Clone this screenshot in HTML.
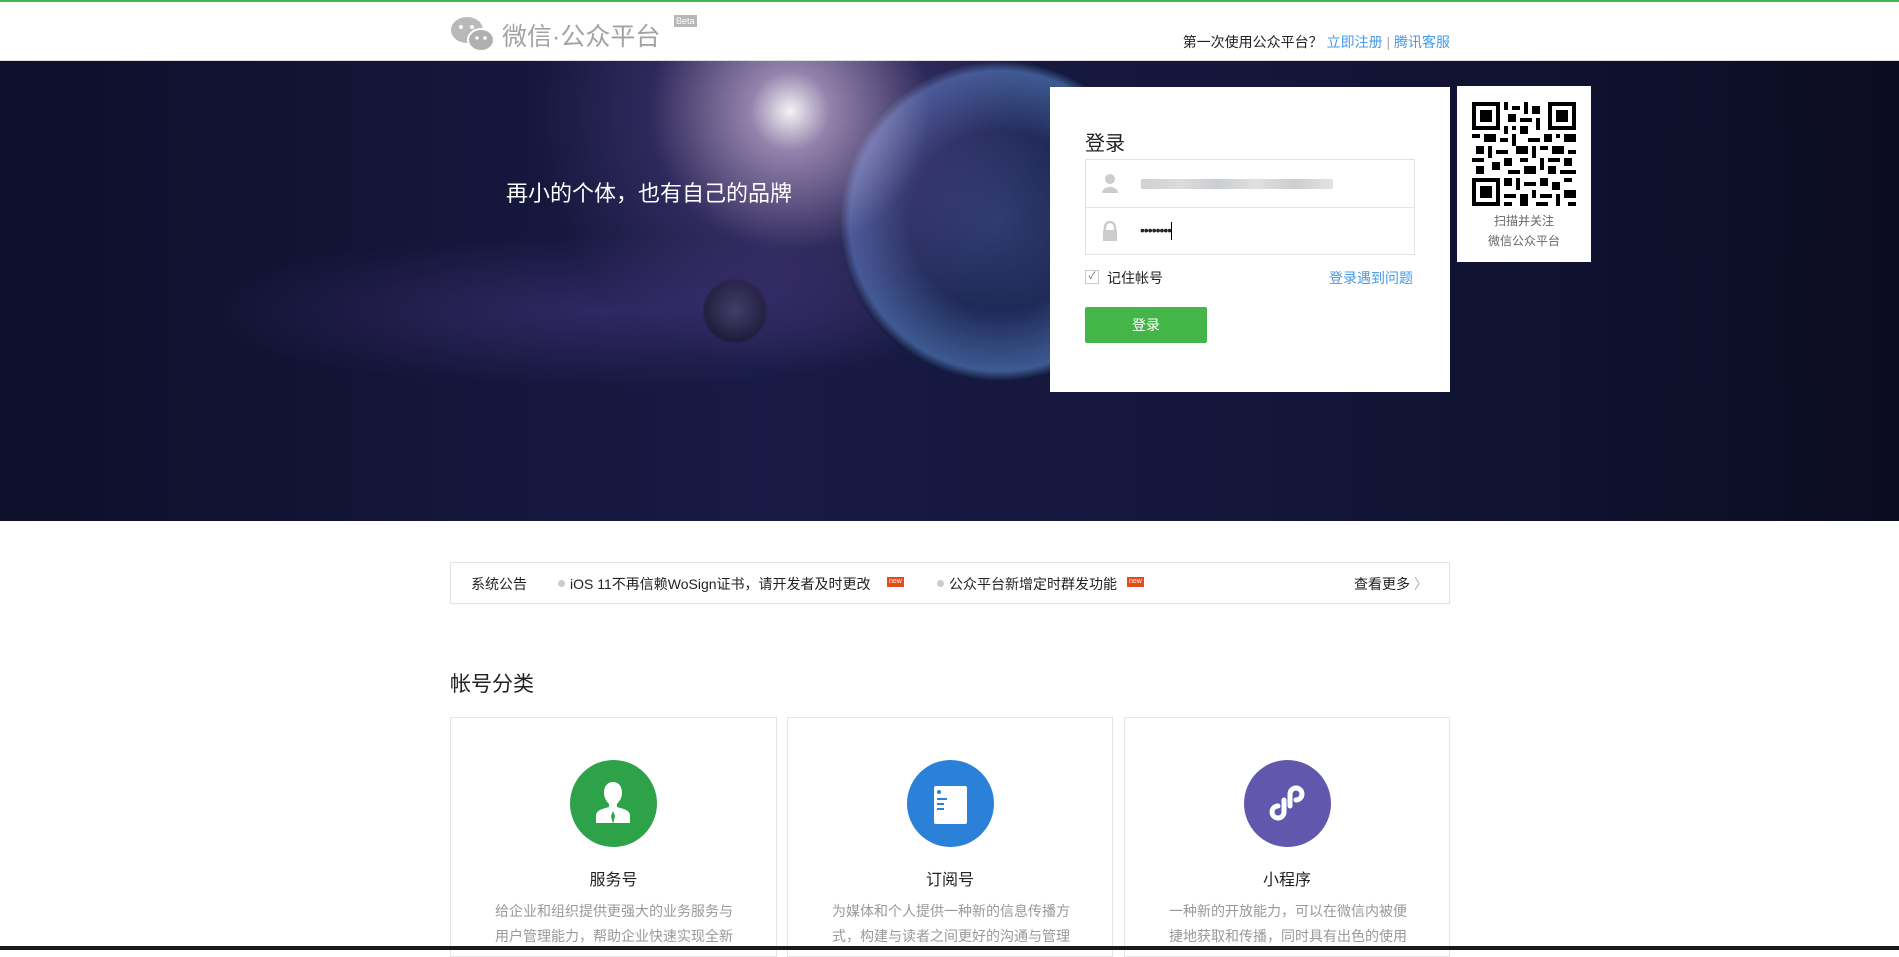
<!DOCTYPE html>
<html><head><meta charset="utf-8"><style>
*{margin:0;padding:0;box-sizing:border-box}
body{width:1899px;height:950px;overflow:hidden;background:#fff;font-family:"Liberation Sans","Noto Sans CJK SC",sans-serif;position:relative;color:#222}
.abs{position:absolute}
#top{left:0;top:0;width:1899px;height:2px;background:#44b549}
#hdr{left:0;top:2px;width:1899px;height:59px;background:#fff;border-bottom:1px solid #ddd}
#banner{left:0;top:61px;width:1899px;height:460px;background:
radial-gradient(circle at 790px 50px,rgba(255,255,255,.95) 0,rgba(230,200,240,.6) 40px,rgba(120,90,170,.25) 140px,transparent 260px),
radial-gradient(circle at 1000px 160px,#2c3a6c 0,#1f2a58 90px,#3d5a92 150px,#141a3c 160px,transparent 162px),
radial-gradient(circle at 735px 250px,#3a3a60 0,#1a1a35 30px,transparent 33px),
radial-gradient(ellipse at 600px 250px,rgba(80,60,140,.45) 0,transparent 400px),
linear-gradient(90deg,#0e0f2a 0,#181a45 40%,#131538 70%,#0b0c22 100%)}
.card{border:1px solid #e5e5e5;background:#fff}
.in{border:1px solid #e3e3e3}
</style></head><body>
<div id="top" class="abs"></div>
<div id="hdr" class="abs">
 <svg class="abs" style="left:450px;top:13px" width="46" height="38" viewBox="0 0 46 38"><ellipse cx="17" cy="15" rx="16" ry="13" fill="#b9b9b9"/><circle cx="11" cy="12" r="2" fill="#fff"/><circle cx="22" cy="12" r="2" fill="#fff"/><ellipse cx="31" cy="25" rx="13" ry="11" fill="#b0b0b0" stroke="#fff" stroke-width="2"/><circle cx="27" cy="23" r="1.7" fill="#fff"/><circle cx="35" cy="23" r="1.7" fill="#fff"/></svg>
 <div class="abs" style="left:502px;top:15px;font-size:25px;color:#a3a3a3">微信·公众平台</div>
 <div class="abs" style="left:674px;top:13px;background:#b7b7b7;color:#fff;font-size:9px;padding:1px 2px">Beta</div>
 <div class="abs" style="right:449px;top:30px;font-size:14px;color:#222">第一次使用公众平台？ <span style="color:#459ae9">立即注册</span> <span style="color:#aaa">|</span> <span style="color:#459ae9">腾讯客服</span></div>
</div>
<div id="banner" class="abs">
 <div class="abs" style="left:506px;top:115px;font-size:22px;color:#fff">再小的个体，也有自己的品牌</div>
 <div class="abs" style="left:1050px;top:26px;width:400px;height:305px;background:#fff">
  <div class="abs" style="left:35px;top:40px;font-size:20px;color:#222">登录</div>
  <div class="abs in" style="left:35px;top:72px;width:330px;height:49px">
   <svg class="abs" style="left:15px;top:13px" width="18" height="20" viewBox="0 0 18 20"><circle cx="9" cy="6" r="5" fill="#ccc"/><path d="M1 20 C1 12 17 12 17 20Z" fill="#ccc"/></svg>
   <div class="abs" style="left:55px;top:19px;width:192px;height:10px;background:linear-gradient(90deg,#ccc,#d8d8d8,#c5c8cc,#ddd,#c8c8c8,#e0e0e0);opacity:.9"></div>
  </div>
  <div class="abs in" style="left:35px;top:120px;width:330px;height:48px">
   <svg class="abs" style="left:15px;top:13px" width="18" height="20" viewBox="0 0 18 20"><path d="M4 9 V6 A5 5 0 0 1 14 6 V9" fill="none" stroke="#ccc" stroke-width="2.5"/><rect x="2" y="9" width="14" height="11" fill="#ccc"/></svg>
   <div class="abs" style="left:54px;top:14px;font-size:14px;color:#222;letter-spacing:-1px">••••••••<span style="display:inline-block;width:1px;height:18px;background:#000;vertical-align:middle"></span></div>
  </div>
  <div class="abs" style="left:35px;top:183px;width:14px;height:14px;border:1px solid #ccc;font-size:10px;color:#666;text-align:center;line-height:12px">✓</div>
  <div class="abs" style="left:57px;top:181px;font-size:14px;color:#222">记住帐号</div>
  <div class="abs" style="left:279px;top:181px;font-size:14px;color:#459ae9">登录遇到问题</div>
  <div class="abs" style="left:35px;top:220px;width:122px;height:36px;background:#44b549;border-radius:2px;color:#fff;font-size:14px;text-align:center;line-height:36px">登录</div>
 </div>
 <div class="abs" style="left:1457px;top:25px;width:134px;height:176px;background:#fff">
  <svg class="abs" style="left:15px;top:16px" width="104" height="104" viewBox="0 0 26 26" shape-rendering="crispEdges">
   <rect width="26" height="26" fill="#fff"/>
   <g fill="#000">
   <path d="M0 0h7v7h-7zM19 0h7v7h-7zM0 19h7v7h-7z"/>
   </g>
   <g fill="#fff"><path d="M1 1h5v5h-5zM20 1h5v5h-5zM1 20h5v5h-5z"/></g>
   <g fill="#000"><path d="M2 2h3v3h-3zM21 2h3v3h-3zM2 21h3v3h-3z"/>
   <path d="M8 0h1v2h-1zM10 1h2v1h-2zM13 0h1v3h-1zM15 1h2v2h-2zM9 3h2v2h-2zM12 4h3v1h-3zM16 4h1v3h-1zM8 6h1v2h-1zM10 6h1v1h-1zM12 6h2v2h-2zM0 8h2v1h-2zM3 8h3v2h-3zM7 9h2v1h-2zM10 8h1v3h-1zM14 9h3v1h-3zM18 8h2v2h-2zM21 8h1v1h-1zM23 8h3v2h-3zM1 11h2v2h-2zM4 11h1v3h-1zM6 12h3v1h-3zM11 11h3v2h-3zM15 11h1v3h-1zM17 11h2v1h-2zM20 11h3v2h-3zM24 12h2v1h-2zM0 14h3v1h-3zM5 15h2v2h-2zM8 14h2v2h-2zM12 14h2v1h-2zM17 14h1v3h-1zM19 14h3v1h-3zM23 14h2v2h-2zM1 16h2v2h-2zM9 17h3v1h-3zM13 16h3v2h-3zM19 16h2v2h-2zM22 17h4v1h-4zM8 19h2v2h-2zM11 19h1v3h-1zM13 20h3v1h-3zM17 19h2v2h-2zM20 20h2v2h-2zM23 19h2v1h-2zM8 23h3v1h-3zM12 23h2v3h-2zM15 22h1v2h-1zM17 23h3v1h-3zM21 23h1v3h-1zM23 22h3v2h-3zM8 25h2v1h-2zM16 25h3v1h-3zM24 25h2v1h-2z"/></g>
  </svg>
  <div class="abs" style="left:0;top:125px;width:134px;text-align:center;font-size:12px;color:#666;line-height:20px">扫描并关注<br>微信公众平台</div>
 </div>
</div>
<div class="abs card" style="left:450px;top:562px;width:1000px;height:42px;border-color:#e3e3e3">
 <div class="abs" style="left:20px;top:11px;font-size:14px;color:#222">系统公告</div>
 <div class="abs" style="left:107px;top:17px;width:7px;height:7px;border-radius:50%;background:#ccc"></div>
 <div class="abs" style="left:119px;top:11px;font-size:14px;color:#222">iOS 11不再信赖WoSign证书，请开发者及时更改</div>
 <div class="abs" style="left:436px;top:14px;background:#e64b1c;color:#fff;font-size:7px;padding:0 2px;line-height:10px">new</div>
 <div class="abs" style="left:486px;top:17px;width:7px;height:7px;border-radius:50%;background:#ccc"></div>
 <div class="abs" style="left:498px;top:11px;font-size:14px;color:#222">公众平台新增定时群发功能</div>
 <div class="abs" style="left:676px;top:14px;background:#e64b1c;color:#fff;font-size:7px;padding:0 2px;line-height:10px">new</div>
 <div class="abs" style="left:903px;top:11px;font-size:14px;color:#222">查看更多 <span style="color:#aaa">〉</span></div>
</div>
<div class="abs" style="left:450px;top:668px;font-size:21px;color:#222">帐号分类</div>

<div class="abs card" style="left:450px;top:717px;width:327px;height:240px">
 <svg class="abs" style="left:119px;top:42px" width="87" height="87" viewBox="0 0 87 87"><circle cx="43.5" cy="43.5" r="43.5" fill="#2ea248"/><path d="M43 22c-6 0-9 5-9 11 0 5 3 9 5 11v3c-7 2-12 3-13 8v8h34v-8c-1-5-6-6-13-8v-3c2-2 5-6 5-11 0-6-3-11-9-11z" fill="#fff"/><path d="M43 51l-2 5 2 8 2-8z" fill="#2ea248"/></svg>
 <div class="abs" style="left:0;top:148px;width:325px;text-align:center;font-size:16px;color:#222">服务号</div>
 <div class="abs" style="left:42px;top:181px;width:242px;font-size:14px;color:#999;line-height:25px;text-align:center">给企业和组织提供更强大的业务服务与用户管理能力，帮助企业快速实现全新</div>
</div>
<div class="abs card" style="left:787px;top:717px;width:326px;height:240px">
 <svg class="abs" style="left:119px;top:42px" width="87" height="87" viewBox="0 0 87 87"><circle cx="43.5" cy="43.5" r="43.5" fill="#2b81d8"/><rect x="27" y="26" width="33" height="38" rx="2" fill="#fff"/><circle cx="32" cy="32" r="2" fill="#2b81d8"/><rect x="30" y="38" width="10" height="2" fill="#2b81d8"/><rect x="30" y="43" width="7" height="2" fill="#2b81d8"/><rect x="30" y="48" width="7" height="2" fill="#2b81d8"/></svg>
 <div class="abs" style="left:0;top:148px;width:324px;text-align:center;font-size:16px;color:#222">订阅号</div>
 <div class="abs" style="left:42px;top:181px;width:242px;font-size:14px;color:#999;line-height:25px;text-align:center">为媒体和个人提供一种新的信息传播方式，构建与读者之间更好的沟通与管理</div>
</div>
<div class="abs card" style="left:1124px;top:717px;width:326px;height:240px">
 <svg class="abs" style="left:119px;top:42px" width="87" height="87" viewBox="0 0 87 87"><circle cx="43.5" cy="43.5" r="43.5" fill="#6158ad"/><path d="M40 40v12a6 6 0 1 1-6-6M46 46v-12a6 6 0 1 1 6 6" fill="none" stroke="#fff" stroke-width="5" stroke-linecap="round"/></svg>
 <div class="abs" style="left:0;top:148px;width:324px;text-align:center;font-size:16px;color:#222">小程序</div>
 <div class="abs" style="left:42px;top:181px;width:242px;font-size:14px;color:#999;line-height:25px;text-align:center">一种新的开放能力，可以在微信内被便捷地获取和传播，同时具有出色的使用</div>
</div>
<div class="abs" style="left:0;top:946px;width:1899px;height:4px;background:#1a1a1a"></div>
</body></html>
